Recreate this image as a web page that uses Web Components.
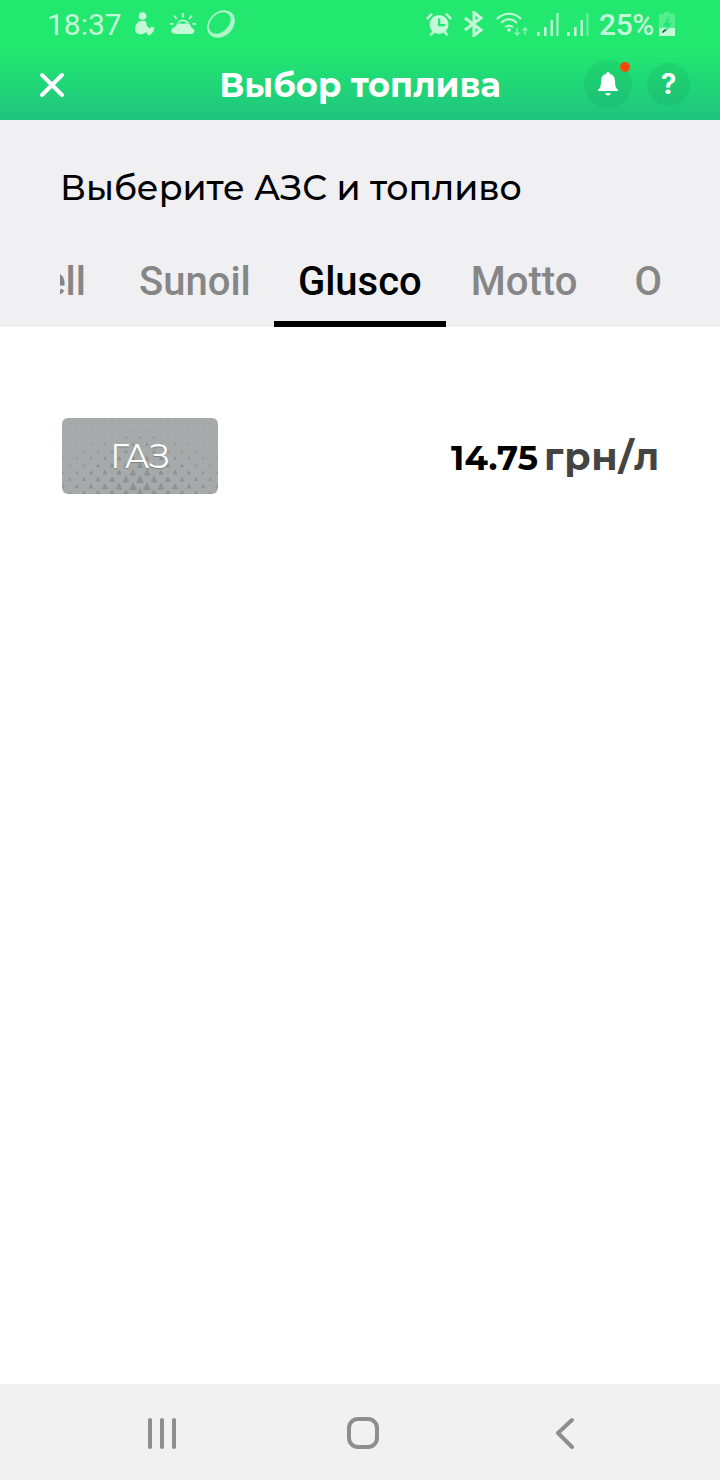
<!DOCTYPE html>
<html lang="ru">
<head>
<meta charset="utf-8">
<style>
  html, body { margin: 0; padding: 0; background: #fff; }
  body { width: 720px; height: 1480px; font-family: "Inter", "Liberation Sans", sans-serif; }
  fuel-app { height: 1480px; }
</style>
</head>
<body>
<fuel-app></fuel-app>
<script>
const signalBars = (lastOpacity) => `
        <svg class="sig" width="22" height="24" viewBox="0 0 22 24" fill="currentColor">
          <rect x="0" y="20" width="2.6" height="4"/><rect x="7" y="15" width="2.6" height="9"/><rect x="13.500" y="8" width="2.4" height="16"/><rect x="19.500" y="1" width="2" height="23" opacity="${lastOpacity}"/>
        </svg>`;

class StatusBar extends HTMLElement {
    constructor() {
        super();
        this.attachShadow({ mode: 'open' }).innerHTML = `
      <style>
        :host { display: flex; align-items: center; height: 48px; padding: 0 45px 2px 47px; color: #c4f8d8; }
        .time { font: 400 30px "Roboto", sans-serif; width: 88px; }
        .left { display: flex; align-items: center; }
        .right { display: flex; align-items: center; margin-left: auto; }
        .pct { font: 500 30px "Roboto", sans-serif; margin-left: 10px; letter-spacing: -0.4px; }
        svg { display: block; }
        .sig + .sig { margin-left: 8px; }
      </style>
      <span class="time">18:37</span>
      <div class="left">
        <svg width="20" height="24" viewBox="0 0 20 24" fill="currentColor">
          <circle cx="7.500" cy="4" r="3.800"/>
          <path d="M5 9h5c1.500 1 2 3 1.500 4.500l3 3 2-2 3 1.500c-.5 3-2.500 6-5 7.500-1.500-.5-3-2-3.500-3.500-2.500 3-7.500 3-10 .5-2.500-3.500-.5-9.500 4-11.500z"/>
        </svg>
        <svg width="26" height="22" viewBox="0 0 26 22" fill="currentColor" style="margin-left:15px">
          <path d="M6 21c-6 0-6-6-1-7 1-3 5-5 8-3 4-2 8 0 8.500 4 4.500 1 3.500 6-.5 6z"/>
          <path d="M6.500 11c1-5 11-6 13 0l-3-1.500c-3-2-7-1.500-10 1.500zM12 0h1.800v4.500H12zM3.500 3l1.300-1 2.500 3.500-1.300 1zM22.500 3l-1.300-1-2.500 3.500 1.300 1zM0 10h3.500v1.800H0zM22.500 10H26v1.800h-3.500z"/>
        </svg>
        <svg width="28" height="28" viewBox="0 0 28 28" style="margin-left:11px">
          <ellipse cx="14" cy="14" rx="15.500" ry="12" transform="rotate(-45 14 14)" fill="currentColor" fill-opacity=".85"/>
          <ellipse cx="12.800" cy="13" rx="12.500" ry="8.800" transform="rotate(-45 12.800 13)" fill="#22e870"/>
        </svg>
      </div>
      <div class="right">
        <svg width="26" height="24" viewBox="0 0 26 24" fill="currentColor" style="margin-right:11px">
          <path d="M0 6l5-5 2 1.500-5.500 5.500zM26 6l-5-5-2 1.500 5.500 5.500z"/>
          <circle cx="13" cy="12.500" r="9.500"/>
          <path d="M6 19l-2.500 4 1.500 1 3.500-3zM20 19l2.500 4-1.500 1-3.500-3z"/>
          <path d="M12 6.500h2.200v5.500h5v2.200H12z" fill="#22e870"/>
        </svg>
        <svg width="22" height="26" viewBox="0 0 22 26" fill="none" stroke="currentColor" stroke-width="3" style="margin-right:11px">
          <path d="M2 7l16 12-7 5.500V1.500L18 7 2 19"/>
        </svg>
        <svg width="32" height="26" viewBox="0 0 32 26" fill="none" stroke="currentColor" style="margin-right:9px">
          <path d="M1 8c7-7 17-7 24 0" stroke-width="2"/>
          <path d="M5 12c5-5 11-5 16 0" stroke-width="2"/>
          <path d="M9 16c3-2 5-2 8 0" stroke-width="2"/>
          <circle cx="13" cy="19" r="1.800" fill="currentColor" stroke="none"/>
          <path d="M21 17v7m-2.500-2.500l2.500 2.500 2.500-2.500M29 24v-7m-2.500 2.500L29 17l2.500 2.500" stroke-width="1.300" opacity=".7"/>
        </svg>
        ${signalBars(1)}
        ${signalBars(.45)}
        <span class="pct">25%</span>
        <svg width="16" height="24" viewBox="0 0 16 24" style="margin-left:5px">
          <path d="M5 0h6v2h5v22H0V2h5z" fill="currentColor" opacity=".3"/>
          <path d="M0 16h16v8H0z" fill="currentColor"/>
          <path d="M10 4L4 14h4l-2 7 7-10H9z" fill="#22e870"/>
          <path d="M3.500 20.500l3-3" stroke="#14402a" stroke-width="1.400"/>
        </svg>
      </div>
    `;
    }
}

class AppHeader extends HTMLElement {
    constructor() {
        super();
        this.attachShadow({ mode: 'open' }).innerHTML = `
      <style>
        :host {
            display: block;
            height: 120px;
            background: linear-gradient(#22e870 0, #22e870 50px, #1fc47f 120px);
            color: #fff;
        }
        .bar { display: grid; grid-template-columns: 1fr auto 1fr; align-items: center; height: 70px; padding: 0 30px; }
        .close { display: block; margin-left: 8px; }
        h1 { margin: 0; font: 700 33.700px "Montserrat", "Inter", "Liberation Sans", sans-serif; line-height: 42px; }
        .btns { display: flex; align-items: center; justify-content: flex-end; gap: 15px; margin-top: -2px; }
        .round {
            position: relative;
            display: flex;
            align-items: center;
            justify-content: center;
            border-radius: 50%;
            background: rgba(0, 80, 60, 0.08);
        }
        .bell { width: 48px; height: 48px; }
        .help { width: 43px; height: 43px; font: 700 28px "Inter", sans-serif; }
        .dot { position: absolute; top: 2px; right: 2px; width: 10px; height: 10px; border-radius: 50%; background: #f9480d; }
      </style>
      <status-bar></status-bar>
      <div class="bar">
        <svg class="close" width="28" height="28" viewBox="0 0 28 28" fill="none" stroke="#fff" stroke-width="4" stroke-linecap="round">
          <path d="M4 4l20 20M24 4L4 24"/>
        </svg>
        <h1><slot></slot></h1>
        <div class="btns">
          <div class="round bell">
            <svg width="20" height="24" viewBox="0 0 20 24" fill="#fff">
              <path d="M10 0c1 0 2 1 2 2 4 1 5 4 5 8 0 4 1 6 3 8v1H0v-1c2-2 3-4 3-8 0-4 1-7 5-8 0-1 1-2 2-2z"/>
              <path d="M7.500 21h5c0 1.500-1 2.500-2.500 2.500S7.500 22.500 7.500 21z"/>
            </svg>
            <span class="dot"></span>
          </div>
          <div class="round help">?</div>
        </div>
      </div>
    `;
    }
}

class StationTabs extends HTMLElement {
    constructor() {
        super();
        this.attachShadow({ mode: 'open' }).innerHTML = `
      <style>
        :host { display: block; background: #f0f0f3; }
        .title {
            margin: 0;
            padding: 47px 0 0 60px;
            font: 500 34.700px "Montserrat", "Inter", "Liberation Sans", sans-serif;
            line-height: 42px;
            color: #000;
        }
        .tabs {
            display: flex;
            height: 88px;
            margin: 30px 0 0 60px;
            font: 500 40px "Roboto", sans-serif;
            color: #868686;
        }
        .tab { flex: none; padding: 20px 0 0 0; line-height: 46px; box-sizing: border-box; text-align: center; }
        .tab.on { color: #000; border-bottom: 6px solid #000; width: 172px; }
        .clip { width: 26px; overflow: hidden; white-space: nowrap; display: flex; justify-content: flex-end; }
        .sun { margin-left: 53px; margin-right: 23px; }
        .motto { margin-left: 25px; }
        .o { margin-left: 57px; }
      </style>
      <h2 class="title">Выберите АЗС и топливо</h2>
      <div class="tabs">
        <div class="tab clip">ell</div>
        <div class="tab sun">Sunoil</div>
        <div class="tab on">Glusco</div>
        <div class="tab motto">Motto</div>
        <div class="tab o">O</div>
      </div>
    `;
    }
}

class FuelRow extends HTMLElement {
    constructor() {
        super();
        const dots = [];
        // точки и треугольники на плашке, к низу они крупнее
        for (let row = 0; row < 11; row++) {
            const y = 5 + row * 7;
            const size = 1.2 + Math.pow(row / 10, 1.1) * 8.5;
            for (let col = 0; col < 12; col++) {
                const x = 8 + col * 14 - (row % 2 ? 7 : 0);
                const fade = 1 - Math.abs(x - 78) / 120;
                const s = Math.max(1.4, size * fade);
                dots.push(`M${x - s / 2} ${y + s / 2}L${x} ${y - s / 2}L${x + s / 2} ${y + s / 2}Z`);
            }
        }
        this.attachShadow({ mode: 'open' }).innerHTML = `
      <style>
        :host { display: flex; align-items: center; justify-content: space-between; padding: 91px 60px 0 62px; }
        .badge {
            position: relative;
            width: 156px;
            height: 76px;
            border-radius: 6px;
            overflow: hidden;
            background: #a6aaaa;
            display: flex;
            align-items: center;
            justify-content: center;
            color: #fff;
            font: 400 33px "Montserrat", "Inter", "Liberation Sans", sans-serif;
        }
        .badge svg { position: absolute; left: 0; top: 0; }
        .badge span { position: relative; text-shadow: 0 1px 1px rgba(0, 0, 0, 0.25); }
        .price { display: flex; align-items: baseline; font: 700 34px "Montserrat", "Inter", "Liberation Sans", sans-serif; color: #000; letter-spacing: 0.1px; }
        .unit { color: #444; margin-left: 6px; font-size: 38px; font-weight: 700; letter-spacing: 0.7px; }
      </style>
      <div class="badge">
        <svg width="156" height="76" viewBox="0 0 156 76"><path d="${dots.join('')}" fill="#8d9191"/></svg>
        <span>ГАЗ</span>
      </div>
      <div class="price">14.75<span class="unit">грн/л</span></div>
    `;
    }
}

class NavBar extends HTMLElement {
    constructor() {
        super();
        this.attachShadow({ mode: 'open' }).innerHTML = `
      <style>
        :host { display: flex; align-items: center; justify-content: space-between; height: 96px; padding: 2px 145px 0 147px; background: #f1f1f1; box-sizing: border-box; }
        svg { display: block; }
        .home { margin-right: 8px; }
      </style>
      <svg width="32" height="32" viewBox="0 0 32 32" stroke="#8e8e8e" stroke-width="4" stroke-linecap="round" fill="none">
        <path d="M3 3v27M15 3v27M27 3v27"/>
      </svg>
      <svg class="home" width="32" height="32" viewBox="0 0 32 32" fill="none" stroke="#8e8e8e" stroke-width="4">
        <rect x="2" y="2" width="28" height="28" rx="9"/>
      </svg>
      <svg width="20" height="32" viewBox="0 0 20 32" fill="none" stroke="#8e8e8e" stroke-width="4" stroke-linecap="round" stroke-linejoin="round">
        <path d="M17 3L3 16l14 14"/>
      </svg>
    `;
    }
}

class FuelApp extends HTMLElement {
    constructor() {
        super();
        this.attachShadow({ mode: 'open' }).innerHTML = `
      <style>
        :host { display: flex; flex-direction: column; width: 720px; background: #fff; }
        main { flex: 1; }
      </style>
      <app-header>Выбор топлива</app-header>
      <station-tabs></station-tabs>
      <main><fuel-row></fuel-row></main>
      <nav-bar></nav-bar>
    `;
    }
}

customElements.define('status-bar', StatusBar);
customElements.define('app-header', AppHeader);
customElements.define('station-tabs', StationTabs);
customElements.define('fuel-row', FuelRow);
customElements.define('nav-bar', NavBar);
customElements.define('fuel-app', FuelApp);
</script>
</body>
</html>
